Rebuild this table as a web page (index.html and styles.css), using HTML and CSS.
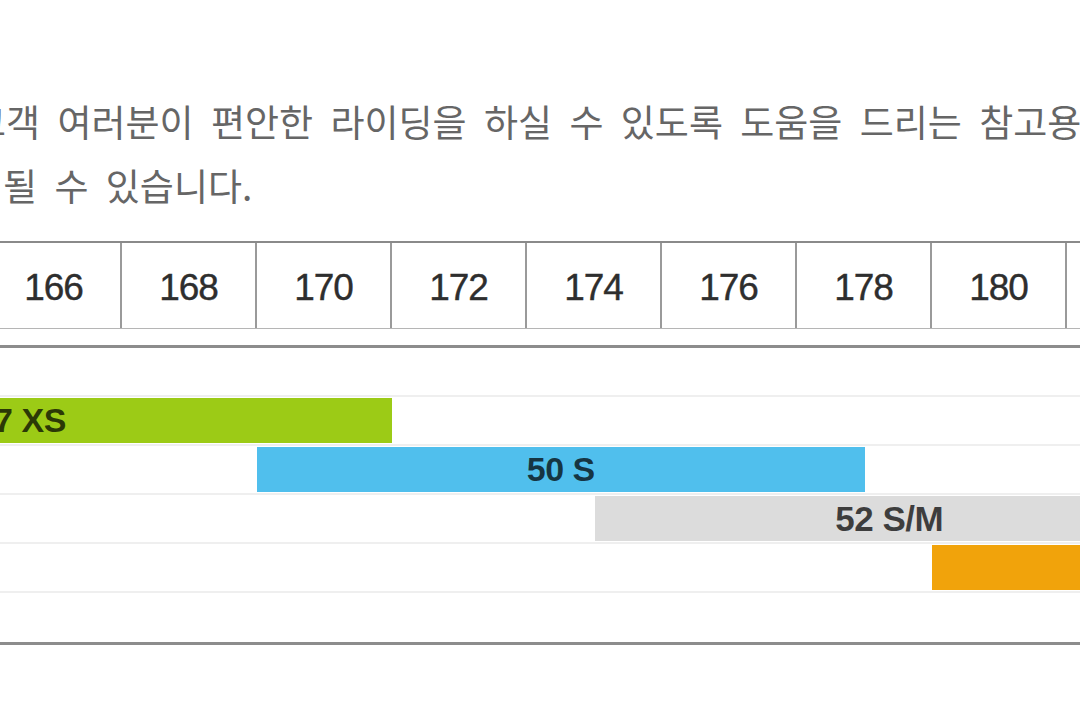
FILE: index.html
```html
<!DOCTYPE html>
<html lang="ko">
<head>
<meta charset="utf-8">
<title>사이즈 차트</title>
<link rel="stylesheet" href="styles.css">
</head>
<body>
<div class="page">
  <div class="intro">
    <span class="line">고객 여러분이 편안한 라이딩을 하실 수 있도록 도움을 드리는 참고용</span>
    <span class="line l2">될 수 있습니다.</span>
  </div>
  <div class="chart">
    <div class="head">
      <div class="cell">160</div>
      <div class="cell">162</div>
      <div class="cell">164</div>
      <div class="cell">166</div>
      <div class="cell">168</div>
      <div class="cell">170</div>
      <div class="cell">172</div>
      <div class="cell">174</div>
      <div class="cell">176</div>
      <div class="cell">178</div>
      <div class="cell">180</div>
      <div class="cell">182</div>
      <div class="cell">184</div>
    </div>
    <div class="rows">
      <div class="row"></div>
      <div class="row"><div class="bar xs">47 XS</div></div>
      <div class="row"><div class="bar s">50 S</div></div>
      <div class="row"><div class="bar sm">52 S/M</div></div>
      <div class="row"><div class="bar m">54 M</div></div>
      <div class="row"></div>
    </div>
  </div>
</div>
</body>
</html>
```
FILE: styles.css
```css
html, body {
  margin: 0;
  padding: 0;
}
body {
  width: 1080px;
  height: 708px;
  overflow: hidden;
  background: #ffffff;
  font-family: "Liberation Sans", Arial, sans-serif;
}
.page {
  padding-top: 89px;
}
.intro {
  margin-left: -28px;
  font-family: "Noto Sans CJK KR", "Liberation Sans", sans-serif;
  font-size: 37px;
  line-height: 64px;
  color: #666666;
  white-space: nowrap;
  letter-spacing: 0;
  word-spacing: 7px;
}
.intro .line {
  display: block;
}
.intro .l2 {
  padding-left: 31px;
}
.chart {
  margin-left: -418px;
  width: 1755px;
  margin-top: 24px;
}
.head {
  display: grid;
  grid-template-columns: repeat(13, 135px);
  border-top: 2px solid #8a8a8a;
  border-bottom: 1px solid #b5b5b5;
}
.head .cell {
  box-sizing: border-box;
  height: 85px;
  padding-top: 4px;
  border-right: 2px solid #9a9a9a;
  display: flex;
  align-items: center;
  justify-content: center;
  font-size: 37px;
  letter-spacing: -1px;
  color: #2e2e2e;
  -webkit-text-stroke: 0.4px #2e2e2e;
}
.rows {
  margin-top: 16px;
  border-top: 3px solid #8c8c8c;
  border-bottom: 3px solid #8c8c8c;
}
.row {
  box-sizing: border-box;
  height: 49px;
  border-bottom: 2px solid #efefef;
  display: grid;
  grid-template-columns: repeat(26, 67.5px);
}
.row:last-child {
  border-bottom: none;
}
.bar {
  grid-row: 1;
  margin: 1px 0 1px;
  display: flex;
  align-items: center;
  justify-content: center;
  font-weight: bold;
  font-size: 34px;
  letter-spacing: -0.5px;
  color: rgba(0, 0, 0, 0.72);
}
.xs { grid-column: 2 / 13; background: #9ccb16; }
.s  { grid-column: 11 / 20; background: #50bfed; }
.sm { grid-column: 16 / 25; margin-right: 18px; background: #dcdcdc; font-size: 35px; }
.m  { grid-column: 21 / 27; background: #f1a30b; }
```
